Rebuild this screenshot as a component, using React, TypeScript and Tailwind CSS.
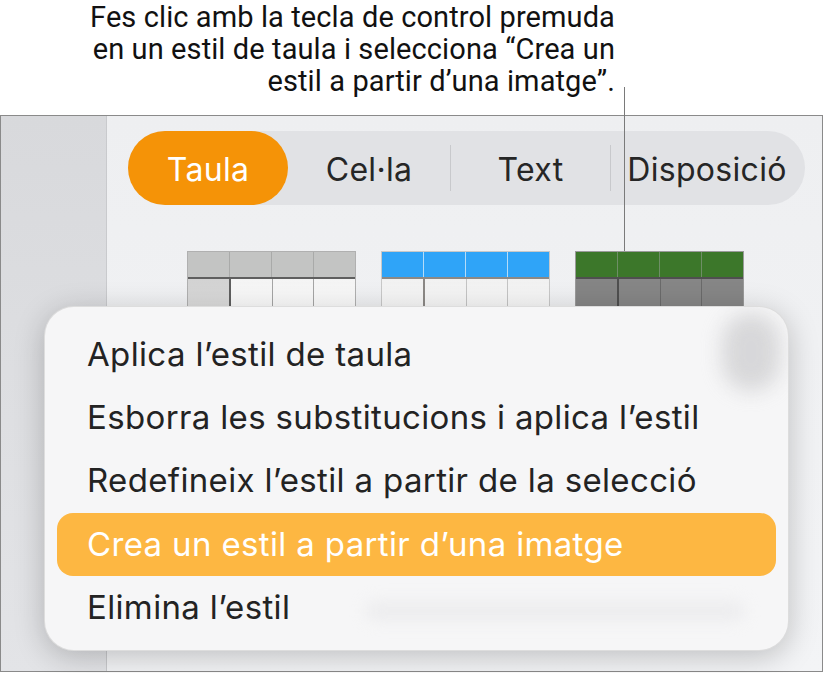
import React from 'react'

const sans = { fontFamily: 'Inter, "Noto Sans", sans-serif' }

type Thumb = {
  head: string
  headSep: string
  rule: string
  first: string
  body: string
  bodySep: string
  edge: string
}

const thumbs: Thumb[] = [
  {
    head: 'bg-[#c3c4c3]',
    headSep: 'border-[#a9aaa9]',
    rule: 'bg-[#5f5f5f]',
    first: 'bg-gradient-to-b from-[#d2d2d2] to-[#dcdcdc]',
    body: 'bg-gradient-to-b from-[#f4f4f4] to-[#fbfbfb]',
    bodySep: 'border-[#a5a5a5]',
    edge: 'border-[#b0b0b0]',
  },
  {
    head: 'bg-[#2fa4f8]',
    headSep: 'border-[#b5dcf8]',
    rule: 'bg-[#8c8986]',
    first: 'bg-gradient-to-b from-[#f1f1f1] to-[#f8f8f8]',
    body: 'bg-gradient-to-b from-[#f1f1f1] to-[#f8f8f8]',
    bodySep: 'border-[#c4c4c4]',
    edge: 'border-[#c8c8c8]',
  },
  {
    head: 'bg-[#3c772a]',
    headSep: 'border-[#6e8e66]',
    rule: 'bg-[#4f4f4f]',
    first: 'bg-[#858585]',
    body: 'bg-[#868686]',
    bodySep: 'border-[#6a6a6a]',
    edge: 'border-[#9a9a9a]',
  },
]

function TableThumb({ t }: { t: Thumb }) {
  return (
    <div className={`w-[169px] h-[56px] border ${t.edge} flex flex-col`}>
      <div className={`flex h-[25px] ${t.head}`}>
        {[0, 1, 2, 3].map((i) => (
          <div key={i} className={`flex-1 ${i > 0 ? `border-l ${t.headSep}` : ''}`} />
        ))}
      </div>
      <div className={`h-[2px] ${t.rule}`} />
      <div className="flex flex-1">
        <div className={`flex-1 ${t.first}`} />
        <div className={`w-[2px] ${t.rule}`} />
        {[1, 2, 3].map((i) => (
          <div key={i} className={`flex-1 ${t.body} ${i > 1 ? `border-l ${t.bodySep}` : ''}`} />
        ))}
      </div>
    </div>
  )
}

const items = [
  'Aplica l’estil de taula',
  'Esborra les substitucions i aplica l’estil',
  'Redefineix l’estil a partir de la selecció',
  'Crea un estil a partir d’una imatge',
  'Elimina l’estil',
]

export default function App() {
  return (
    <div className="relative w-[825px] h-[673px] bg-white overflow-hidden">
      {/* callout */}
      <div
        className="w-[615px] h-[115px] pt-[1px] text-right text-[29px] tracking-[0.1px] leading-[32px] text-[#111]"
        style={{ fontFamily: 'Roboto, "Liberation Sans", sans-serif' }}
      >
        Fes clic amb la tecla de control premuda
        <br />
        en un estil de taula i selecciona “Crea un
        <br />
        estil a partir d’una imatge”.
      </div>

      {/* frame */}
      <div className="flex w-[823px] h-[557px] border border-[#8a8a8a]">
        <div className="w-[106px] border-r border-[#c9cacd] bg-gradient-to-b from-[#d8d9dc] to-[#e3e4e7]" />
        <div className="flex-1 bg-gradient-to-b from-[#eeeff1] to-[#f3f4f6] pl-[21px] pt-[15px]" style={sans}>
          <div className="flex items-center w-[677px] h-[74px] pt-[4px] rounded-full bg-[#e1e2e5] text-[32px] tracking-[0.3px] text-[#262626]">
            <div className="w-[160px] h-[74px] -mt-[4px] pt-[4px] rounded-full bg-[#f59307] text-white flex items-center justify-center">
              Taula
            </div>
            <div className="w-[162px] flex items-center justify-center">Cel·la</div>
            <div className="w-px h-[46px] -mt-[4px] bg-[#c8c9cc]" />
            <div className="w-[159px] flex items-center justify-center">Text</div>
            <div className="w-px h-[46px] -mt-[4px] bg-[#c8c9cc]" />
            <div className="flex-1 flex items-center justify-center pr-[2px]">Disposició</div>
          </div>
          <div className="flex gap-[25px] pl-[59px] pt-[46px]">
            {thumbs.map((t, i) => (
              <TableThumb key={i} t={t} />
            ))}
          </div>
        </div>
      </div>

      {/* callout line */}
      <div className="absolute left-[624px] top-[87px] w-px h-[164px] bg-[#7a7a7a]" />

      {/* context menu */}
      <div
        className="absolute left-[44px] top-[306px] w-[745px] h-[345px] rounded-[30px] bg-[#f6f6f7] border border-black/10 shadow-[0_6px_30px_rgba(0,0,0,0.22)] overflow-hidden pt-[16px] px-[12px]"
        style={sans}
      >
        <div className="absolute right-[8px] top-[6px] w-[58px] h-[78px] rounded-full bg-[#cbcbcd] blur-[10px] opacity-70" />
        <div className="absolute left-[320px] top-[294px] w-[380px] h-[20px] rounded-full bg-[#e6e6e8] blur-[8px] opacity-60" />
        <div className="relative flex flex-col">
          {items.map((label, i) => (
            <div
              key={label}
              className={`h-[63.3px] flex items-center pl-[30px] rounded-[16px] text-[33px] tracking-[0.35px] ${
                i === 3 ? 'bg-[#fdb742] text-white' : 'text-[#232323]'
              }`}
            >
              {label}
            </div>
          ))}
        </div>
      </div>
    </div>
  )
}
